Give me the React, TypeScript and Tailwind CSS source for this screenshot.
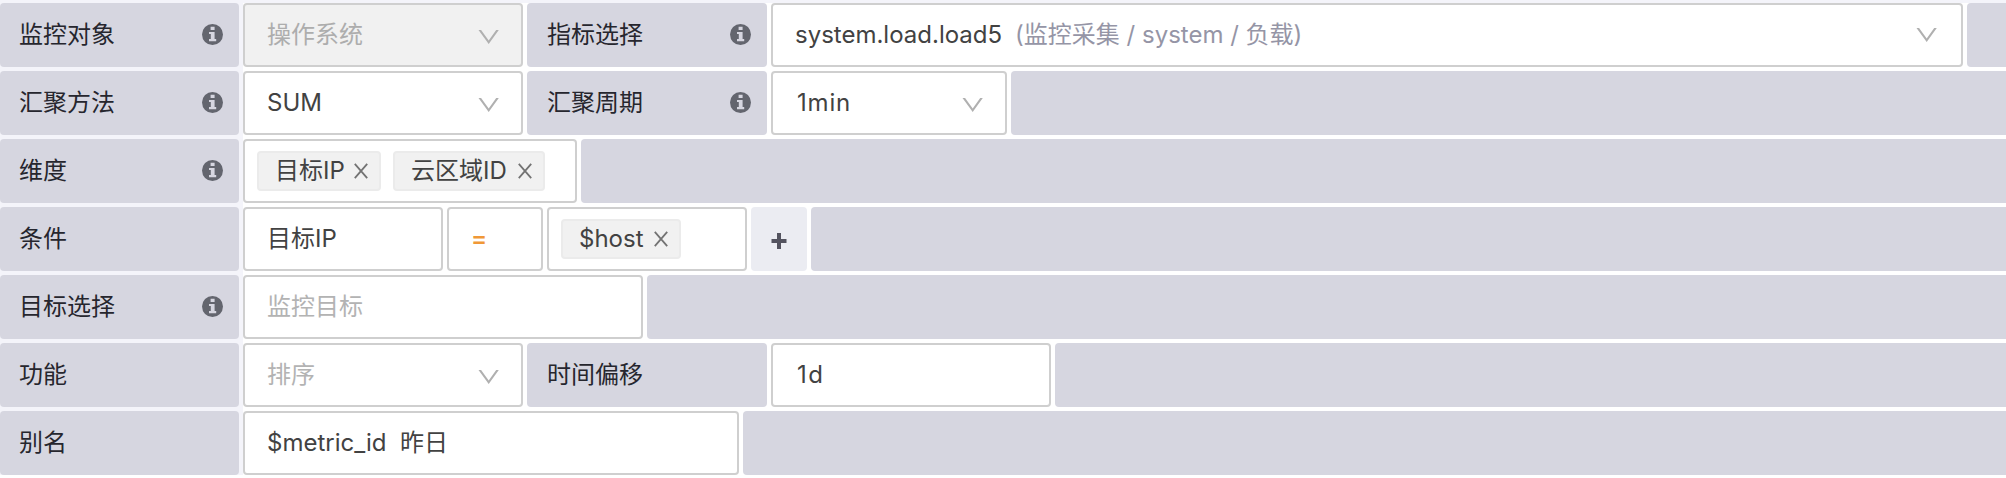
import React from "react";

const cx = (...c: (string | false | undefined)[]) => c.filter(Boolean).join(" ");

function InfoIcon() {
  return (
    <svg className="mb-px size-[21px] shrink-0" viewBox="0 0 21 21" aria-hidden="true">
      <circle cx="10.5" cy="10.5" r="10.5" fill="#63656e" />
      <path d="M8.6 2.8h4v3.2h-4zM7 8h5.6v7h1.6v2.2H7V15h1.8v-5H7z" fill="#d6d6e0" />
    </svg>
  );
}

function Chevron({ className }: { className?: string }) {
  return (
    <svg className={cx("h-[14px] w-[21px] shrink-0", className)} viewBox="0 0 21 14" aria-hidden="true">
      <path d="M0.5 0h2.6l7.6 10.6L18.2 0h2.6L10.7 14z" fill="#b0b0b0" />
    </svg>
  );
}

function CloseIcon() {
  return (
    <svg className="h-4 w-[14px] shrink-0" viewBox="0 0 14 16" aria-hidden="true">
      <path d="M0.8 0.8l12.4 14.4M13.2 0.8L0.8 15.2" stroke="#737373" strokeWidth="1.8" fill="none" />
    </svg>
  );
}

function Row({ children }: { children: React.ReactNode }) {
  return <div className="flex h-16 gap-1">{children}</div>;
}

function Label({ text, info }: { text: string; info?: boolean }) {
  return (
    <div className="flex w-60 shrink-0 items-center justify-between rounded-[4px] bg-[#d6d6e0] pr-4 pl-5 text-[#26262e] first:w-[239px] first:pl-[19px]">
      <span>{text}</span>
      {info && <InfoIcon />}
    </div>
  );
}

function Field({ className, padding = "px-[22px]", children }: { className: string; padding?: string; children?: React.ReactNode }) {
  return (
    <div className={cx("flex shrink-0 items-center rounded-[4px] border-2 border-[#cfcfcf]", padding, className)}>
      {children}
    </div>
  );
}

function Text({ children, className }: { children: React.ReactNode; className?: string }) {
  return <span className={cx("whitespace-pre", className)}>{children}</span>;
}

function Tag({ children, className }: { children: React.ReactNode; className: string }) {
  return (
    <div className={cx("flex h-10 shrink-0 items-center justify-between rounded-[4px] border-2 border-[#ebebeb] bg-[#f1f1f1] pr-[11px] pl-4", className)}>
      <Text>{children}</Text>
      <CloseIcon />
    </div>
  );
}

const Fill = () => <div className="-mr-2 flex-1 rounded-[4px] bg-[#d6d6e0]" />;

export default function App() {
  return (
    <div className="h-[478px] w-full overflow-hidden bg-white font-['Inter','Noto_Sans_CJK_SC',sans-serif] text-[24px] leading-8 text-[#424242]">
      <div className="h-[3px] bg-[#f4f4fa]" />
      <div className="flex flex-col gap-1 bg-[linear-gradient(to_right,#f4f4fa_243px,#fff_243px)]">
        <Row>
          <Label text="监控对象" info />
          <Field className="w-[280px] justify-between bg-[#f1f1f1] text-[#adadad]">
            <Text>操作系统</Text>
            <Chevron className="mt-1" />
          </Field>
          <Label text="指标选择" info />
          <Field padding="pl-[22px] pr-6" className="w-[1192px] justify-between bg-white">
            <div className="flex">
              <Text>system.load.load5</Text>
              <Text className="ml-[13px] text-[#9595a6]">(监控采集 / system / 负载)</Text>
            </div>
            <Chevron />
          </Field>
          <Fill />
        </Row>
        <Row>
          <Label text="汇聚方法" info />
          <Field className="w-[280px] justify-between bg-white">
            <Text>SUM</Text>
            <Chevron className="mt-1" />
          </Field>
          <Label text="汇聚周期" info />
          <Field className="w-[236px] justify-between bg-white">
            <Text className="pl-[2px] tracking-[0.8px]">1min</Text>
            <Chevron className="mt-1" />
          </Field>
          <Fill />
        </Row>
        <Row>
          <Label text="维度" info />
          <Field padding="px-3" className="w-[334px] gap-3 bg-white">
            <Tag className="w-[124px]">目标IP</Tag>
            <Tag className="w-[152px]">云区域ID</Tag>
          </Field>
          <Fill />
        </Row>
        <Row>
          <Label text="条件" />
          <Field className="w-[200px] bg-white"><Text>目标IP</Text></Field>
          <Field className="w-24 bg-white font-semibold text-[#f09837]"><Text>=</Text></Field>
          <Field padding="px-3" className="w-[200px] bg-white">
            <Tag className="w-[120px]">$host</Tag>
          </Field>
          <div className="flex w-14 shrink-0 items-center justify-center rounded-[4px] bg-[#ebecf2]">
            <svg className="mt-1 h-4 w-4" viewBox="0 0 16 16" aria-label="添加">
              <path d="M6 0h4v6h5.5v4H10v6H6v-6H0.5V6H6z" fill="#53535f" />
            </svg>
          </div>
          <Fill />
        </Row>
        <Row>
          <Label text="目标选择" info />
          <Field className="w-[400px] bg-white text-[#b3b3b3]"><Text>监控目标</Text></Field>
          <Fill />
        </Row>
        <Row>
          <Label text="功能" />
          <Field className="w-[280px] justify-between bg-white text-[#b3b3b3]">
            <Text>排序</Text>
            <Chevron className="mt-1" />
          </Field>
          <Label text="时间偏移" />
          <Field className="w-[280px] bg-white"><Text className="pl-[2px] tracking-[1.6px]">1d</Text></Field>
          <Fill />
        </Row>
        <Row>
          <Label text="别名" />
          <Field className="w-[496px] bg-white"><Text>$metric_id  昨日</Text></Field>
          <Fill />
        </Row>
      </div>
      <div className="h-[3px] bg-white" />
    </div>
  );
}
